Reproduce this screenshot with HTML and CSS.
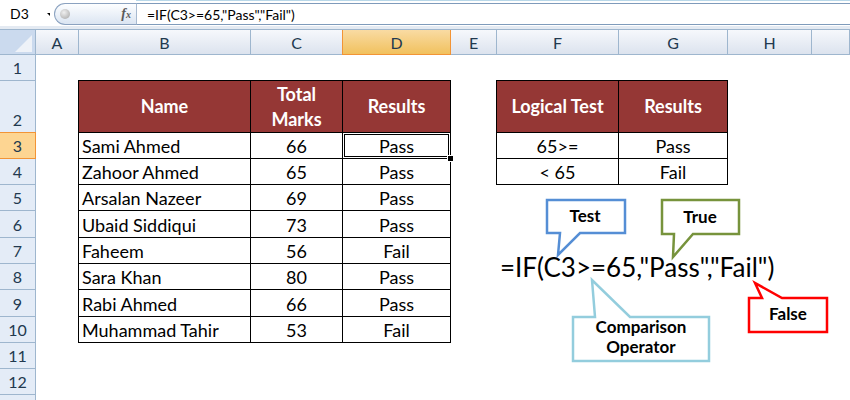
FILE: index.html
```html
<!DOCTYPE html>
<html lang="en">
<head>
  <meta charset="UTF-8">
  <title>IF Function</title>
  <link rel="stylesheet" href="styles.css">
</head>
<body>
  <div class="formula-bar">
    <div class="name-box">D3</div>
    <div class="name-drop"><span class="drop-arrow"></span></div>
    <div class="fx-pill"><span class="knob"></span><span class="fx">f<small>x</small></span></div>
    <div class="formula-input">=IF(C3&gt;=65,"Pass","Fail")</div>
  </div>

  <div class="sheet">
    <div class="corner">
      <svg width="35" height="24" viewBox="0 0 35 24"><polygon points="15,22 32,22 32,5" fill="#eef2f8"/></svg>
    </div>
    <div class="col-head">A</div>
    <div class="col-head">B</div>
    <div class="col-head">C</div>
    <div class="col-head active">D</div>
    <div class="col-head">E</div>
    <div class="col-head">F</div>
    <div class="col-head">G</div>
    <div class="col-head">H</div>
    <div class="col-head"></div>

    <div class="row-head">1</div>
    <div class="row-head">2</div>
    <div class="row-head active">3</div>
    <div class="row-head">4</div>
    <div class="row-head">5</div>
    <div class="row-head">6</div>
    <div class="row-head">7</div>
    <div class="row-head">8</div>
    <div class="row-head">9</div>
    <div class="row-head">10</div>
    <div class="row-head">11</div>
    <div class="row-head">12</div>
    <div class="row-head"></div>

    <table class="data names">
      <colgroup><col style="width:172px"><col style="width:92px"><col style="width:108px"></colgroup>
      <tr class="head-row"><th>Name</th><th>Total<br>Marks</th><th>Results</th></tr>
      <tr><td>Sami Ahmed</td><td class="c">66</td><td class="c sel">Pass</td></tr>
      <tr><td>Zahoor Ahmed</td><td class="c">65</td><td class="c">Pass</td></tr>
      <tr><td>Arsalan Nazeer</td><td class="c">69</td><td class="c">Pass</td></tr>
      <tr class="r27"><td>Ubaid Siddiqui</td><td class="c">73</td><td class="c">Pass</td></tr>
      <tr><td>Faheem</td><td class="c">56</td><td class="c">Fail</td></tr>
      <tr><td>Sara Khan</td><td class="c">80</td><td class="c">Pass</td></tr>
      <tr class="r27"><td>Rabi Ahmed</td><td class="c">66</td><td class="c">Pass</td></tr>
      <tr><td>Muhammad Tahir</td><td class="c">53</td><td class="c">Fail</td></tr>
    </table>

    <table class="data logic">
      <colgroup><col style="width:122px"><col style="width:109px"></colgroup>
      <tr class="head-row"><th>Logical Test</th><th>Results</th></tr>
      <tr><td class="c">65&gt;=</td><td class="c">Pass</td></tr>
      <tr><td class="c">&lt; 65</td><td class="c">Fail</td></tr>
    </table>
  </div>

  <svg class="callouts" width="850" height="400" viewBox="0 0 850 400">
    <path class="co co-test" d="M547 200H625V233H580L558 255L560 233H547Z"/>
    <path class="co co-true" d="M662 200H739V234H693L673 257L674 234H662Z"/>
    <path class="co co-op" d="M573 317H595L592 280L630 317H709V361H573Z"/>
    <path class="co co-false" d="M749 298H762L755 283L782 298H827V332H749Z"/>
    <text class="label" x="585" y="222">Test</text>
    <text class="label" x="700" y="223">True</text>
    <text class="label" x="641" y="333">Comparison</text>
    <text class="label" x="641" y="353">Operator</text>
    <text class="label" x="788" y="320">False</text>
    <text class="big" x="500" y="277">=IF(C3&gt;=65,"Pass","Fail")</text>
  </svg>
</body>
</html>
```

FILE: styles.css
```css
body {
  margin: 0;
  width: 850px;
  height: 400px;
  overflow: hidden;
  position: relative;
  background: #fff;
  font-family: Lato, "Liberation Sans", sans-serif;
  color: #000;
}

/* formula bar */
.formula-bar {
  display: flex;
  align-items: flex-start;
  height: 26px;
  background: #fff;
  border-bottom: 3px solid #e4eaf2;
}
.name-box {
  width: 46px;
  height: 26px;
  box-sizing: border-box;
  padding-left: 10px;
  font-size: 14px;
  line-height: 28px;
}
.name-drop {
  width: 8px;
  height: 26px;
  position: relative;
}
.drop-arrow {
  position: absolute;
  left: 1px;
  top: 13px;
  border-left: 3px solid transparent;
  border-top: 3px solid #000;
}
.fx-pill {
  width: 82px;
  height: 22px;
  margin-top: 3px;
  box-sizing: border-box;
  border: 1px solid #8ba2c0;
  border-right: none;
  border-radius: 11px 0 0 11px;
  background: linear-gradient(#fdfeff, #dbe5f2);
  display: flex;
  align-items: center;
  justify-content: space-between;
  padding: 0 5px 0 5px;
}
.knob {
  width: 10px;
  height: 10px;
  border-radius: 50%;
  background: radial-gradient(circle at 40% 35%, #f0f0f0, #a3a3a3);
}
.fx {
  font-family: "Liberation Serif", serif;
  font-style: italic;
  font-weight: bold;
  font-size: 14px;
  color: #5b5b5b;
}
.fx small {
  font-size: 10px;
}
.formula-input {
  flex: 1;
  height: 22px;
  margin-top: 3px;
  box-sizing: border-box;
  border-top: 1px solid #7f9bbb;
  border-bottom: 1px solid #7f9bbb;
  border-left: 1px solid #a7bad0;
  box-shadow: 0 -2px 0 #fff, 0 -3px 0 #b9d8e9;
  padding-left: 10px;
  font-size: 14px;
  line-height: 21px;
}

/* sheet grid */
.sheet {
  display: grid;
  grid-template-columns: 36px 43px 172px 92px 108px 46px 122px 109px 84px 1fr;
  grid-template-rows: 25px 26px 52px 26px 26px 26px 27px 26px 26px 27px 26px 26px 26px 26px;
  border-top: 1px solid #9eb6ce;
}
.corner {
  box-sizing: border-box;
  border-right: 1px solid #9eb6ce;
  border-bottom: 1px solid #9eb6ce;
  background: #cbdaee;
}
.corner svg {
  display: block;
}
.col-head {
  box-sizing: border-box;
  border-right: 1px solid #9eb6ce;
  border-bottom: 1px solid #9eb6ce;
  background: linear-gradient(#f6f8fc, #dce3ee);
  text-align: center;
  font-size: 16px;
  line-height: 25px;
  color: #22394f;
}
.col-head.active {
  margin-left: -1px;
  border: 1px solid #f29436;
  border-top: none;
  background: linear-gradient(#f9dba3, #f1c15e);
}
.row-head {
  grid-column: 1;
  box-sizing: border-box;
  border-right: 1px solid #9eb6ce;
  border-bottom: 1px solid #9eb6ce;
  background: #e4ecf7;
  display: flex;
  align-items: flex-end;
  justify-content: center;
  font-size: 16px;
  line-height: 24px;
  color: #22394f;
}
.row-head.active {
  margin-top: -1px;
  border-top: 1px solid #f29436;
  border-bottom-color: #f29436;
  border-right-color: #f29436;
  background: #fdd592;
}

/* tables on the sheet */
.data {
  border-collapse: separate;
  border-spacing: 0;
  table-layout: fixed;
  border-left: 1px solid #000;
  border-top: 1px solid #000;
  margin: -1px 0 0 -1px;
  align-self: start;
  font-size: 18px;
}
.names {
  grid-column: 3 / 6;
  grid-row: 3 / 12;
  width: 373px;
}
.logic {
  grid-column: 7 / 9;
  grid-row: 3 / 6;
  width: 232px;
}
.data th,
.data td {
  border-right: 1px solid #000;
  border-bottom: 1px solid #000;
  padding: 0 3px;
  height: 25px;
  white-space: nowrap;
}
.data th {
  background: #953735;
  color: #fff;
  font-weight: bold;
  line-height: 25px;
  vertical-align: middle;
}
.data .head-row th {
  height: 51px;
}
.data .r27 td {
  height: 26px;
}
.data td {
  vertical-align: bottom;
  line-height: 23px;
}
.data td.c {
  text-align: center;
}
.data td.sel {
  position: relative;
  box-shadow: inset 0 0 0 1px #fff, inset 0 0 0 2px #000;
}
.data td.sel::after {
  content: "";
  position: absolute;
  right: -4px;
  bottom: -4px;
  width: 5px;
  height: 5px;
  background: #000;
  border: 1px solid #fff;
  z-index: 2;
}

/* callouts and formula text */
.callouts {
  position: absolute;
  top: 0;
  left: 0;
}
.co {
  fill: #fff;
  stroke-width: 2.5;
  stroke-linejoin: miter;
}
.co-test { stroke: #558ed5; }
.co-true { stroke: #77933c; }
.co-op { stroke: #93cddd; }
.co-false { stroke: #ff0000; }
.label {
  font-family: Lato, "Liberation Sans", sans-serif;
  font-weight: bold;
  font-size: 17px;
  text-anchor: middle;
  fill: #000;
}
.big {
  font-family: Lato, "Liberation Sans", sans-serif;
  font-size: 26px;
  fill: #000;
}
```
